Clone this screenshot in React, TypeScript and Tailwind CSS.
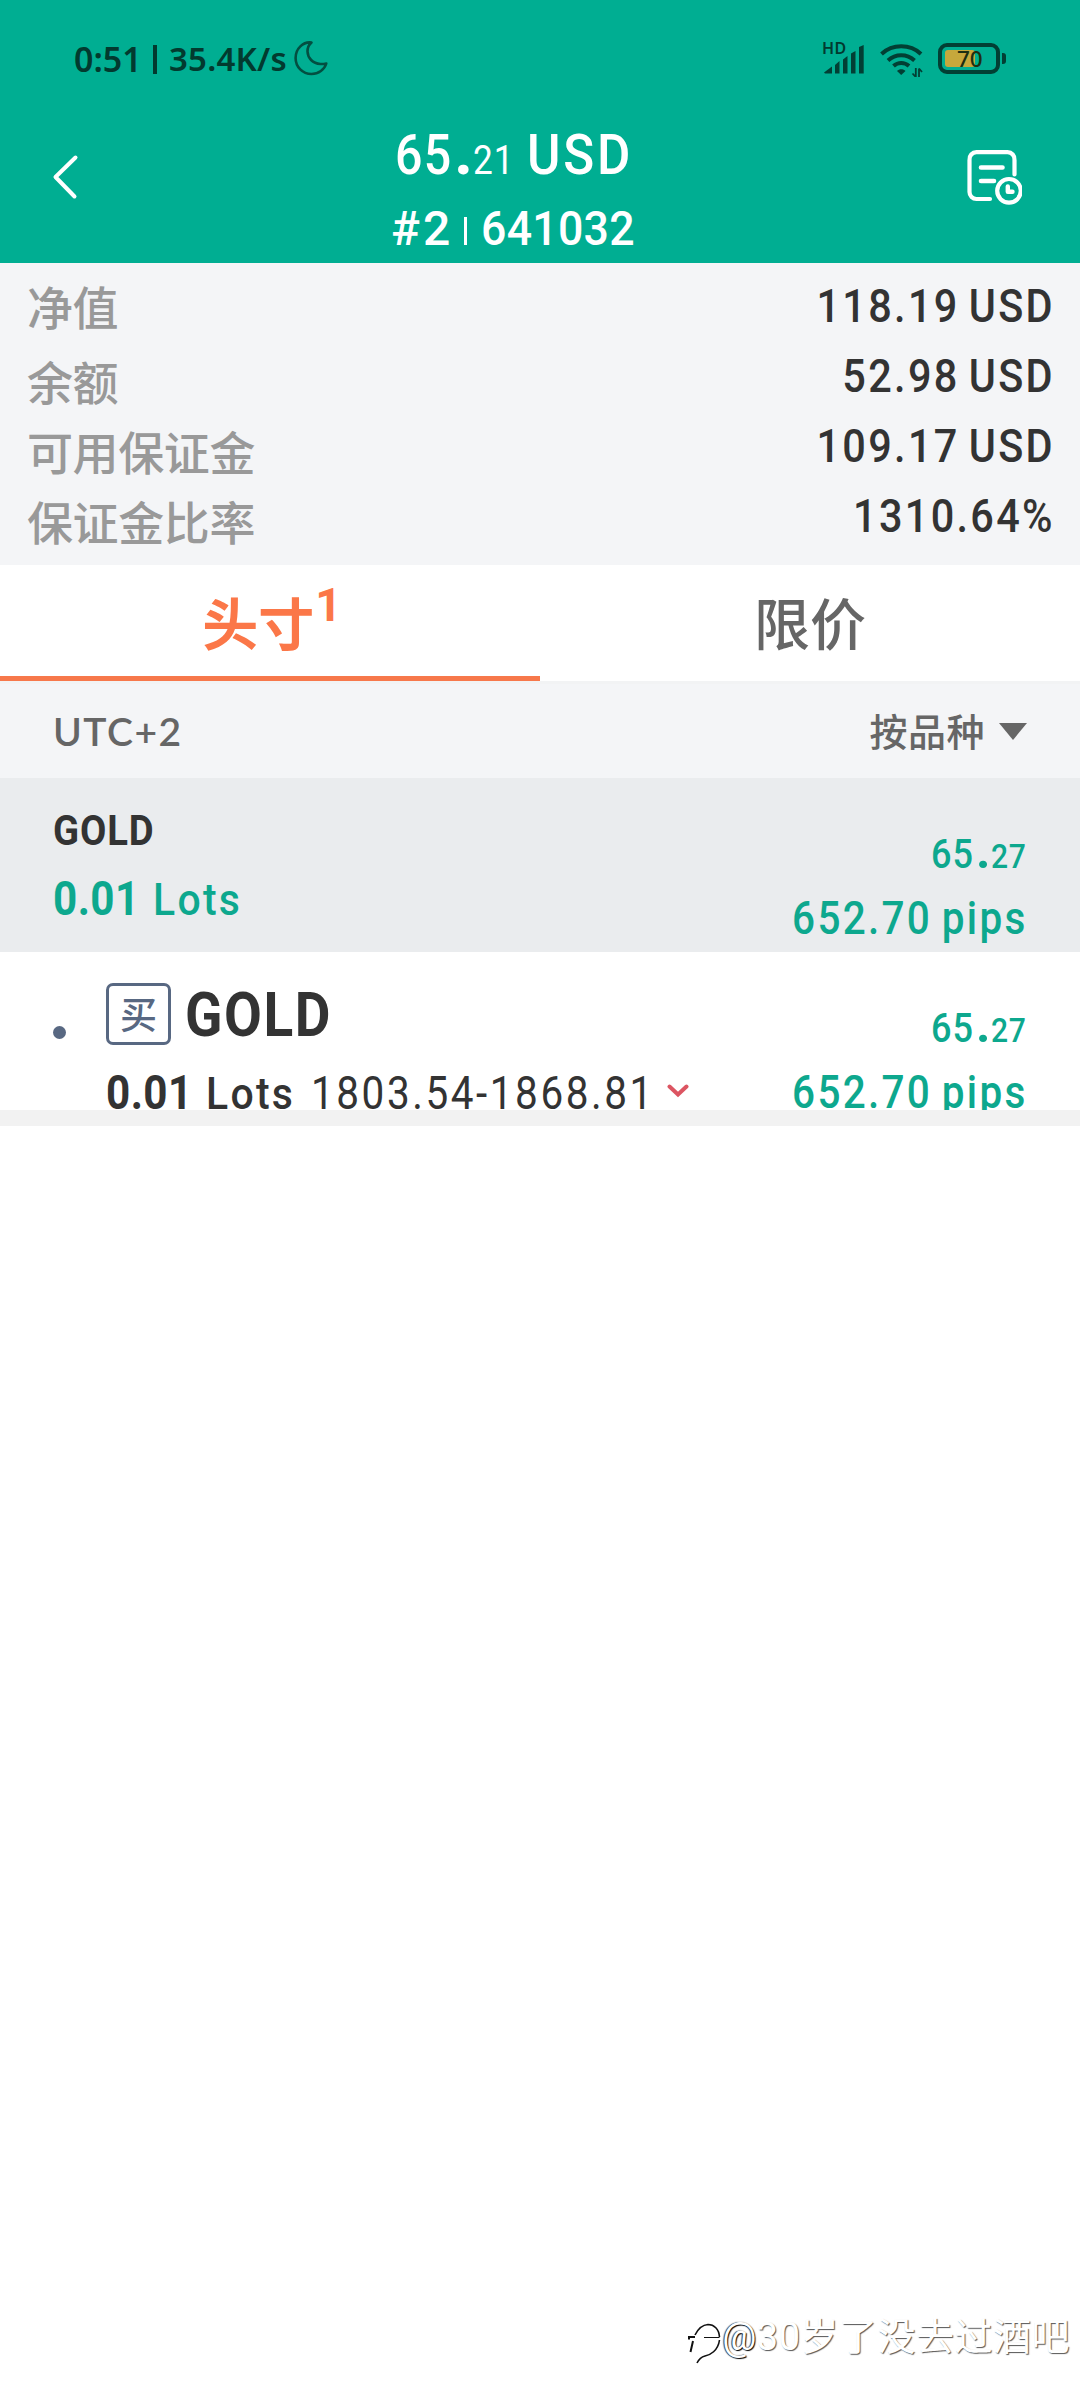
const INK = "#023f34";

function StatusBar() {
  return (
    <div className="flex h-[118px] items-start justify-between pl-[74px] pr-[74px] pt-[39px] text-[#023a2f]">
      <div className="flex h-[40px] items-center font-['Noto_Sans'] font-semibold leading-[40px]">
        <span className="w-[79px] text-[34px]">0:51</span>
        <span className="mr-[12px] h-[29px] w-[4px] bg-[#023a2f]" />
        <span className="w-[125px] text-[33px] tracking-[0.200px]">35.4K/s</span>
        <svg className="-mt-[2px]" width="34" height="36" viewBox="0 0 34 36" fill="none" stroke="#034f41" strokeWidth="2.6" strokeLinejoin="round">
          <path d="M17.5 2.5C9 1.5 1.6 8.500 1.600 18C1.600 27 8.600 34 17.500 34C24.500 34 30.500 29.500 32.300 23.500C30 24 28.500 24.200 26.500 24C18.500 23.500 13.800 18 13.500 11.500C13.400 8 14.800 4.800 17.500 2.500Z" />
        </svg>
      </div>
      <div className="flex h-[40px] items-center">
        <div className="relative h-[36px] w-[42px]">
          <span className="absolute -top-[3px] left-[-1px] font-['Noto_Sans'] text-[16px] font-semibold leading-[20px] tracking-[0.5px]">HD</span>
          <svg width="42" height="36" viewBox="0 0 42 36" fill={INK}>
            <path d="M1 31.500L9 25.500V32.500H2Z" />
            <path d="M12 24L16.500 20V32.500H12Z" />
            <path d="M20 18.500L24.500 15V32.500H20Z" />
            <path d="M28 12.500L32.500 10V32.500H28Z" />
            <path d="M36 6L40.700 4V32.500H36Z" />
          </svg>
        </div>
        <svg className="ml-[15px]" width="43" height="36" viewBox="0 0 43 36" fill="none" stroke={INK} strokeWidth="4">
          <path d="M1.500 13C12.500 2.800 30 2.800 41 13" />
          <path d="M8 19.500C15.500 12.500 27 12.500 34.500 19.500" />
          <path d="M13.500 25C18 21 24.500 21 29 25" />
          <path d="M17 30C19 27.500 23.500 27.500 25.500 30L21.200 34Z" fill={INK} stroke="none" />
          <path d="M35.800 36V27M35.800 36L32.500 32.500M39 36.500V27.500M39 27.500L42 31" strokeWidth="1.800" />
        </svg>
        <div className="relative ml-[15px] mt-[-1px] h-[31px] w-[62px] rounded-[9px] border-4 border-[#023f34]">
          <div className="absolute left-[3px] top-[3px] h-[17px] w-[30px] rounded-[3px] bg-[#c6a83c]" />
          <span className="absolute left-[15px] top-[0px] font-['Noto_Sans'] text-[22.500px] font-medium leading-[23px] text-[#1c2f12]">70</span>
        </div>
        <span className="ml-[2px] mt-[-1px] h-[11px] w-[4px] rounded-r-[3px] bg-[#023f34]" />
      </div>
    </div>
  );
}

function Header() {
  return (
    <header className="h-[263px] bg-[#00ae92] text-white">
      <StatusBar />
      <div className="flex pl-[52px]">
        <svg className="mt-[35px]" width="28" height="48" viewBox="0 0 28 48" fill="none" stroke="white" strokeWidth="4" strokeLinecap="round" strokeLinejoin="round">
          <path d="M23.500 4.500L3.500 24L22.500 43.500" />
        </svg>
        <div className="ml-[310px] w-[574px] whitespace-nowrap">
          <div className="flex h-[74px] items-baseline pl-[5px] leading-[74px]">
            <span className="w-[59px] origin-left scale-x-[.88] text-[55px] font-medium tracking-[1.500px]">65</span>
            <span className="w-[19px] text-[66px] font-bold leading-[1px]">.</span>
            <span className="w-[54px] origin-left scale-x-[.88] text-[40px] tracking-[1px]">21</span>
            <span className="origin-left scale-x-[.93] text-[55px] font-medium tracking-[3px]">USD</span>
          </div>
          <div className="mt-[2px] flex h-[70px] items-center text-[48px] font-medium leading-[70px]">
            <span className="w-[74px] pl-[1px] tracking-[3px]">#2</span>
            <span className="mr-[14px] mt-[3px] h-[28px] w-[3px] bg-white" />
            <span className="origin-left scale-x-[.93] tracking-[0.300px]">641032</span>
          </div>
        </div>
        <svg className="mt-[31px]" width="58" height="58" viewBox="0 0 58 58" fill="none" stroke="white" strokeWidth="4.200" strokeLinecap="round">
          <path d="M50.500 25.500V11A7 7 0 0 0 43.500 3.200H12.500A7 7 0 0 0 5.500 11V43A7 7 0 0 0 12.500 50H26" />
          <path d="M17 18.500H38.500M17 32H30" strokeWidth="4.600" />
          <circle cx="45" cy="41.800" r="11.800" />
          <path d="M43.800 37.500V42.800H48.500" strokeLinejoin="round" strokeWidth="4.400" />
        </svg>
      </div>
    </header>
  );
}

function Summary() {
  return (
    <section className="flex h-[302px] justify-between bg-[#f4f5f7] pl-[26px] pr-[25px] text-[46px]">
      <div className="pl-[1px] pt-[6px] font-medium leading-[70px] tracking-[-0.400px] text-[#999]">
        <div className="leading-[80px]">净值</div>
        <div>余额</div>
        <div>可用保证金</div>
        <div>保证金比率</div>
      </div>
      <div className="origin-right scale-x-[.9] pt-[8px] text-right font-medium leading-[70px] tracking-[2.600px] text-[#333] [word-spacing:-4px]">
        <div>118.19 USD</div>
        <div>52.98 USD</div>
        <div>109.17 USD</div>
        <div>1310.64%</div>
      </div>
    </section>
  );
}

function Tabs() {
  return (
    <nav className="grid h-[116px] grid-cols-2 bg-white text-[56px] leading-[116px]">
      <div className="flex h-[116px] justify-center border-b-[5px] border-[#f7784b] font-bold text-[#fb7748]">
        <span className="ml-[4px] h-[111px] leading-[122px]">头寸</span>
        <span className="h-[80px] pl-[1px] text-[46px] leading-[80px]">1</span>
      </div>
      <div className="text-center font-medium leading-[122px] text-[#666]">限价</div>
    </nav>
  );
}

function Profit() {
  return (
    <div className="font-medium text-[#0da88e]">
      <div className="flex h-[60px] items-baseline justify-end leading-[60px]">
        <span className="w-[45px] origin-left scale-x-[.88] text-[41px] tracking-[1px]">65</span>
        <span className="w-[15px] text-[50px] font-bold leading-[1px]">.</span>
        <span className="w-[36px] origin-left scale-x-[.91] text-[33px] tracking-[0.800px]">27</span>
      </div>
      <div className="-mr-[1px] mt-[2px] h-[64px] origin-right scale-x-[.88] whitespace-nowrap text-[46px] leading-[64px] tracking-[2.600px] [word-spacing:-3px]">652.70 pips</div>
    </div>
  );
}

export default function App() {
  return (
    <div className="relative flex h-[2400px] w-[1080px] flex-col overflow-hidden bg-white font-['Roboto','Noto_Sans_CJK_SC',sans-serif]">
      <Header />
      <Summary />
      <Tabs />
      <div className="flex h-[97px] items-center justify-between border-t-[3px] border-[#f2f3f4] bg-[#f4f5f7] pl-[53px] pr-[53px] text-[#666]">
        <span className="font-['Lato'] text-[39px] font-semibold tracking-[1.500px]">UTC+2</span>
        <div className="flex items-center">
          <span className="pt-[5px] text-[38px] font-medium tracking-[0.500px]">按品种</span>
          <svg className="ml-[14px]" width="28" height="17" viewBox="0 0 28 17" fill="#666">
            <path d="M0 0H28L14 17Z" />
          </svg>
        </div>
      </div>
      <section className="flex h-[174px] justify-between bg-[#eaecee] pl-[53px] pr-[53px] pt-[23px]">
        <div>
          <div className="h-[60px] origin-left scale-x-[.91] text-[42px] font-bold leading-[60px] tracking-[1px] text-[#333]">GOLD</div>
          <div className="flex h-[76px] items-baseline leading-[76px] text-[#0da88e]">
            <span className="w-[100px] origin-left scale-x-[.88] text-[48px] font-bold tracking-[0.500px]">0.01</span>
            <span className="origin-left scale-x-[.91] text-[45px] font-medium tracking-[2.500px]">Lots</span>
          </div>
        </div>
        <div className="pt-[23px]"><Profit /></div>
      </section>
      <section className="flex h-[158px] justify-between bg-white pl-[53px] pr-[51px] text-[#333]">
        <div className="flex">
          <span className="mr-[40px] mt-[74px] h-[13px] w-[13px] rounded-full bg-[#586882]" />
          <div className="pt-[31px]">
            <div className="flex h-[62px] items-center">
              <span className="h-[62px] w-[65px] rounded-[7px] border-[3px] border-[#586882] text-center text-[37px] font-medium leading-[62px] text-[#586882]">买</span>
              <span className="ml-[14px] mt-[2px] origin-left scale-x-[.9] text-[61px] font-bold leading-[62px] tracking-[1.800px]">GOLD</span>
            </div>
            <div className="mt-[1px] flex h-[94px] items-baseline whitespace-nowrap leading-[94px]">
              <span className="w-[100px] origin-left scale-x-[.88] text-[48px] font-bold tracking-[0.500px]">0.01</span>
              <span className="w-[105px] origin-left scale-x-[.91] text-[45px] font-medium tracking-[2.500px]">Lots</span>
              <span className="w-[356px] origin-left scale-x-[.88] text-[46px] tracking-[2.900px]">1803.54-1868.81</span>
              <svg className="-translate-y-[11px]" width="22" height="14" viewBox="0 0 22 14" fill="none" stroke="#dc5562" strokeWidth="4" strokeLinecap="round">
                <path d="M2.500 2.500L11 10.500L19.500 2.500" />
              </svg>
            </div>
          </div>
        </div>
        <div className="h-[158px] overflow-hidden pr-[2px] pt-[46px]"><Profit /></div>
      </section>
      <div className="h-[16px] bg-[#f2f2f2]" />
      <div className="absolute bottom-[36px] right-[10px] flex h-[54px] items-center text-[38px] leading-[54px] tracking-[0.500px] text-white">
        <svg width="36" height="54" viewBox="-2 -13 36 54" fill="none" stroke="#111" strokeWidth="1.600">
          <path d="M7 12Q12 2 20 1.500C26 1.500 31 6 31.500 14" />
          <path d="M1 16.500V14H7M5 18L2.500 29" strokeWidth="2" />
          <path d="M16 14.500H31.500" strokeWidth="1" />
          <path d="M31.500 17C30 28 22 32 17 33C13 34 11 36 9 40" />
        </svg>
        <span className="[text-shadow:1px_1px_1px_#000,-1px_0_1px_#333]">@</span>
        <span className="[text-shadow:1px_1px_1px_#555]">30岁了没去过酒吧</span>
      </div>
    </div>
  );
}
